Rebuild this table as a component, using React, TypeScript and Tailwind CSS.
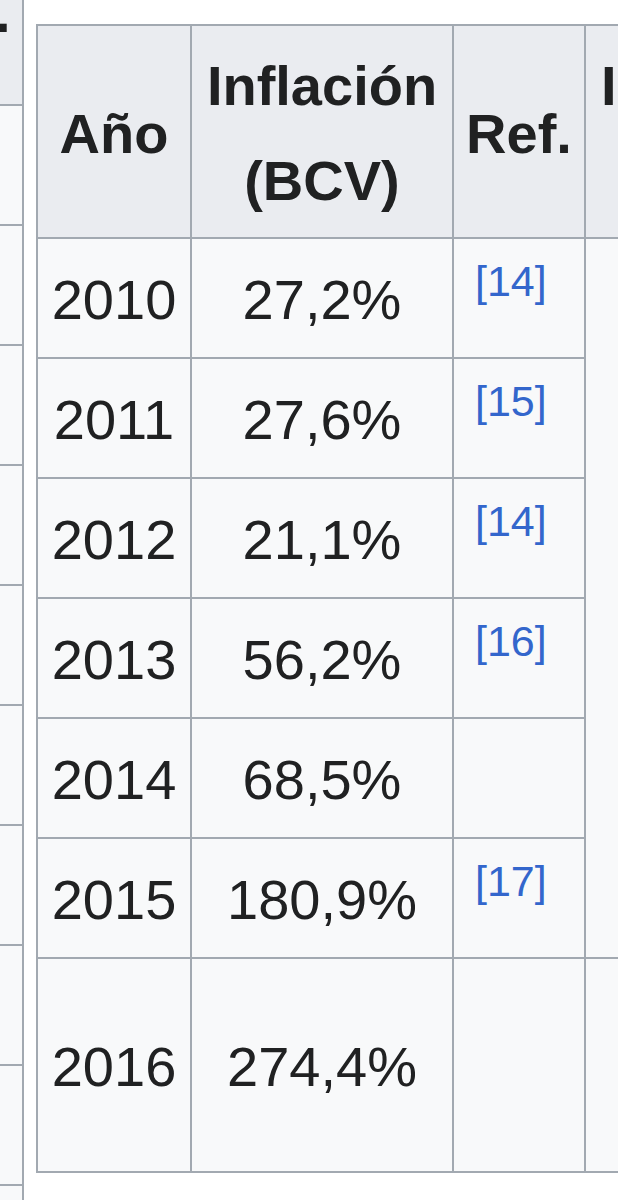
import React from "react";

const rows: { year: string; value: string; ref?: string }[] = [
  { year: "2010", value: "27,2%", ref: "[14]" },
  { year: "2011", value: "27,6%", ref: "[15]" },
  { year: "2012", value: "21,1%", ref: "[14]" },
  { year: "2013", value: "56,2%", ref: "[16]" },
  { year: "2014", value: "68,5%" },
  { year: "2015", value: "180,9%", ref: "[17]" },
];

const cell =
  "border-r-2 border-b-2 border-[#a2a9b1] bg-[#f8f9fa] text-[#202122]";
const head =
  "border-r-2 border-b-2 border-[#a2a9b1] bg-[#eaecf0] text-[#202122] font-bold flex items-center justify-center text-center pt-[3px]";

export default function App() {
  return (
    <div
      className="w-[618px] h-[1200px] bg-white overflow-hidden flex items-start"
      style={{ fontFamily: '"Liberation Sans", Arial, sans-serif' }}
    >
      {/* left partial table */}
      <div className="w-[24px] shrink-0 flex flex-col border-r-2 border-[#a2a9b1]">
        <div className="relative h-[106px] bg-[#eaecf0] border-b-2 border-[#a2a9b1] overflow-hidden">
          <span className="absolute left-[-5px] top-[-15px] text-[56px] leading-[56px] font-bold text-[#202122]">
            .
          </span>
        </div>
        {Array.from({ length: 10 }).map((_, i) => (
          <div
            key={i}
            className="h-[120px] bg-[#f8f9fa] border-b-2 border-[#a2a9b1]"
          />
        ))}
      </div>

      {/* main table */}
      <div className="ml-[12px] mt-[24px] flex-1 overflow-hidden">
        <div className="grid w-[812px] grid-cols-[154px_262px_132px_262px] grid-rows-[213px_120px_120px_120px_120px_120px_120px_214px] border-l-2 border-t-2 border-[#a2a9b1] text-[56px] leading-[95px]">
          {/* header */}
          <div className={head}>Año</div>
          <div className={head}>
            <span>
              Inflación
              <br />
              (BCV)
            </span>
          </div>
          <div className={head}>Ref.</div>
          <div className={head}>
            <span>
              Inflación
              <br />
              (INE)
            </span>
          </div>

          {rows.map((r, i) => (
            <React.Fragment key={r.year}>
              <div className={`${cell} flex items-center justify-center pt-[3px]`}>
                {r.year}
              </div>
              <div className={`${cell} flex items-center justify-center pt-[3px]`}>
                {r.value}
              </div>
              <div className={`${cell} pl-[21px] pt-[21px]`}>
                {r.ref ? (
                  <sup className="text-[43px] leading-[43px] text-[#3366cc] align-baseline top-0 block">
                    {r.ref}
                  </sup>
                ) : null}
              </div>
              {i === 0 ? <div className={`${cell} row-span-6`} /> : null}
            </React.Fragment>
          ))}

          {/* last row */}
          <div className={`${cell} flex items-center justify-center pt-[3px]`}>
            2016
          </div>
          <div className={`${cell} flex items-center justify-center pt-[3px]`}>
            274,4%
          </div>
          <div className={cell} />
          <div className={cell} />
        </div>
      </div>
    </div>
  );
}
